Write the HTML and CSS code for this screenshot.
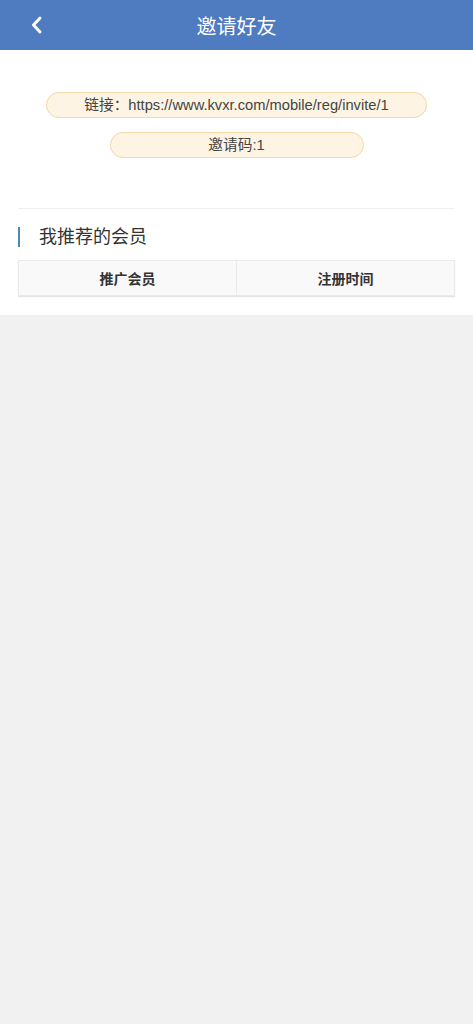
FILE: index.html
```html
<!DOCTYPE html>
<html lang="zh-CN">
<head>
    <meta charset="UTF-8">
    <meta name="viewport" content="width=device-width, initial-scale=1.0">
    <title>邀请好友</title>
    <link rel="stylesheet" href="styles.css">
</head>
<body>
    <header class="topbar">
        <a class="back" href="#">
            <svg width="14" height="20" viewBox="0 0 14 20"><path d="M10 3 L3.5 10 L10 17" fill="none" stroke="#fff" stroke-width="3" stroke-linecap="round" stroke-linejoin="round"/></svg>
        </a>
        <h1>邀请好友</h1>
    </header>

    <div class="panel">
        <div class="invite">
            <div class="pill pill-link">链接：https://www.kvxr.com/mobile/reg/invite/1</div>
            <div class="pill pill-code">邀请码:1</div>
        </div>

        <div class="members">
            <h2>我推荐的会员</h2>
            <table class="member-table">
                <thead>
                    <tr>
                        <th>推广会员</th>
                        <th>注册时间</th>
                    </tr>
                </thead>
            </table>
        </div>
    </div>
</body>
</html>
```

FILE: styles.css
```css
body {
    margin: 0;
    background-color: #f1f1f1;
    font-family: 'Liberation Sans', 'Noto Sans CJK SC', sans-serif;
    color: #333;
}
.topbar {
    position: relative;
    height: 50px;
    background-color: #4f7bc0;
    display: flex;
    align-items: center;
    justify-content: center;
}
.topbar h1 {
    margin: 0;
    color: #fff;
    font-size: 20px;
    font-weight: 400;
}
.back {
    position: absolute;
    left: 30px;
    top: 15px;
    display: flex;
}
.panel {
    background-color: #fff;
    padding: 0 18px 19px;
}
.invite {
    display: flex;
    flex-direction: column;
    align-items: center;
    gap: 14px;
    padding: 42px 0 50px;
    border-bottom: 1px solid #eee;
}
.pill {
    height: 24px;
    line-height: 24px;
    box-sizing: content-box;
    background-color: #fdf4e3;
    border: 1px solid #f3d9a6;
    border-radius: 13px;
    text-align: center;
    font-size: 14.7px;
    color: #444;
}
.pill-link {
    width: 379px;
}
.pill-code {
    width: 252px;
}
.members h2 {
    margin: 18px 0 13px;
    padding-left: 19px;
    border-left: 2px solid #4a8ab8;
    font-size: 18px;
    font-weight: 400;
    line-height: 20px;
    color: #333;
}
.member-table {
    width: 100%;
    border-collapse: collapse;
    box-shadow: 0 1px 1px #e4e4e4;
}
.member-table th {
    width: 50%;
    height: 34px;
    padding: 0;
    background-color: #f9f9f9;
    border: 1px solid #eaeaea;
    font-size: 14px;
    font-weight: 700;
    color: #333;
}
```
